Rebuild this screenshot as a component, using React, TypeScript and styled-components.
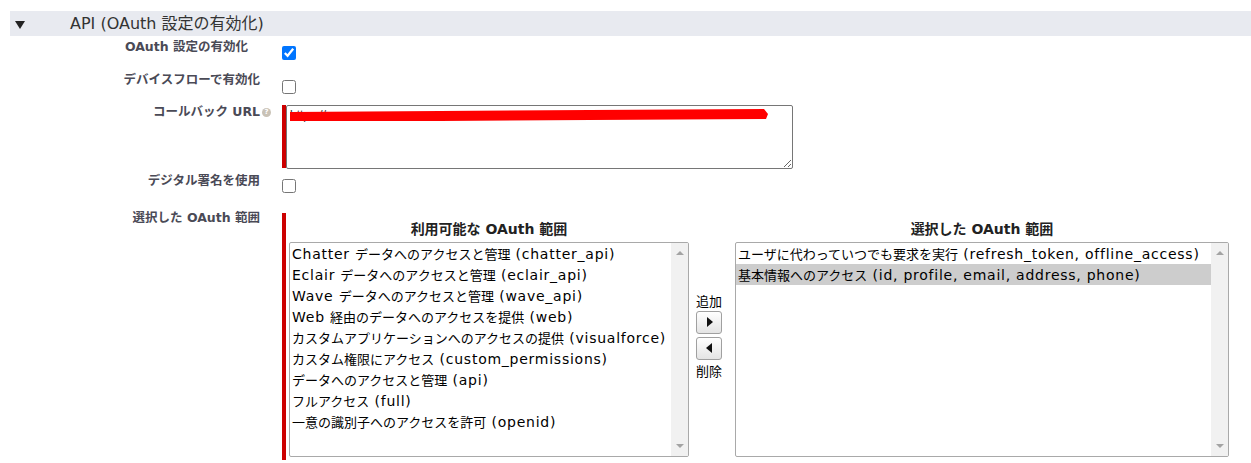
import styled, { createGlobalStyle } from 'styled-components';

const availableScopes = [
  'Chatter データへのアクセスと管理 (chatter_api)',
  'Eclair データへのアクセスと管理 (eclair_api)',
  'Wave データへのアクセスと管理 (wave_api)',
  'Web 経由のデータへのアクセスを提供 (web)',
  'カスタムアプリケーションへのアクセスの提供 (visualforce)',
  'カスタム権限にアクセス (custom_permissions)',
  'データへのアクセスと管理 (api)',
  'フルアクセス (full)',
  '一意の識別子へのアクセスを許可 (openid)',
];

const selectedScopes = [
  'ユーザに代わっていつでも要求を実行 (refresh_token, offline_access)',
  '基本情報へのアクセス (id, profile, email, address, phone)',
];

// latin runs get their own (wider) face, like the old listbox font
const splitScript = (text: string) => text.split(/([\x20-\x7e]+)/).filter(Boolean);
const isLatin = (part: string) => /^[\x20-\x7e]+$/.test(part);

const ScopeText: React.FC<{ text: string }> = ({ text }) => (
  <>
    {splitScript(text).map((part, idx) =>
      isLatin(part) ? <Latin key={idx}>{part}</Latin> : <span key={idx}>{part}</span>
    )}
  </>
);

const GlobalStyle = createGlobalStyle`
  body {
    margin: 0;
    background: #fff;
    font-family: "DejaVu Sans", "Noto Sans CJK JP", sans-serif;
  }
`;

const App: React.FC = () => {
  return (
    <Page>
      <GlobalStyle />
      <SectionHeader>
        <Toggle />
        <SectionTitle>API (OAuth 設定の有効化)</SectionTitle>
      </SectionHeader>
      <Form>
        <Label $pr={34}>OAuth 設定の有効化</Label>
        <Field $pt={8} $pb={11}>
          <Check type="checkbox" defaultChecked />
        </Field>

        <Label>デバイスフローで有効化</Label>
        <Field $pt={9} $pb={9}>
          <Check type="checkbox" />
        </Field>

        <Label>
          コールバック URL<HelpIcon>?</HelpIcon>
        </Label>
        <Field $pt={2} $pb={4}>
          <Required>
            <UrlInput defaultValue="https://xxxxxxxxxx-xxxx-xxxxxxxxxxxxxxxxxxxx.xxx.xxxxxx.xxx/xxxxxxxxxxxxxxxxxxxx" />
            <Redaction viewBox="0 0 480 16" width="480" height="16">
              <polygon points="0,4 150,3 300,2 474,1 478,6 476,11 300,12 150,13 0,13" fill="#ff0000" />
            </Redaction>
          </Required>
        </Field>

        <Label>デジタル署名を使用</Label>
        <Field $pt={7} $pb={16}>
          <Check type="checkbox" />
        </Field>

        <Label>選択した OAuth 範囲</Label>
        <Field $pt={4} $pb={0}>
          <ScopePicker>
            <ScopeColumn>
              <ColumnTitle>利用可能な OAuth 範囲</ColumnTitle>
              <ListBox $w={400}>
                <Options>
                  {availableScopes.map((s) => (
                    <Option key={s}>
                      <ScopeText text={s} />
                    </Option>
                  ))}
                </Options>
                <ScrollTrack>
                  <ArrowUp />
                  <ArrowDown />
                </ScrollTrack>
              </ListBox>
            </ScopeColumn>

            <Mover>
              <MoverText>追加</MoverText>
              <MoveButton>
                <TriRight />
              </MoveButton>
              <MoveButton>
                <TriLeft />
              </MoveButton>
              <MoverText>削除</MoverText>
            </Mover>

            <ScopeColumn>
              <ColumnTitle>選択した OAuth 範囲</ColumnTitle>
              <ListBox $w={494}>
                <Options>
                  {selectedScopes.map((s, idx) => (
                    <Option key={s} $selected={idx === 1}>
                      <ScopeText text={s} />
                    </Option>
                  ))}
                </Options>
                <ScrollTrack>
                  <ArrowUp />
                  <ArrowDown />
                </ScrollTrack>
              </ListBox>
            </ScopeColumn>
          </ScopePicker>
        </Field>
      </Form>
    </Page>
  );
};

const Page = styled.div`
  padding: 11px 0 0 10px;
  height: 463px;
  box-sizing: border-box;
  overflow: hidden;
`;

const SectionHeader = styled.div`
  display: flex;
  align-items: center;
  height: 25px;
  background: #e8eaf0;
  padding-left: 5px;
`;

const Toggle = styled.div`
  width: 0;
  height: 0;
  border-left: 5px solid transparent;
  border-right: 5px solid transparent;
  border-top: 8px solid #222;
  margin-right: 45px;
  margin-top: 2px;
`;

const SectionTitle = styled.div`
  font-size: 16px;
  color: #333;
  line-height: 20px;
`;

const Form = styled.div`
  display: grid;
  grid-template-columns: 272px 1fr;
  margin-top: 2px;
`;

const Label = styled.div<{ $pr?: number }>`
  padding: 1px ${(p) => p.$pr ?? 22}px 0 0;
  text-align: right;
  font-weight: bold;
  font-size: 12.5px;
  line-height: 16px;
  color: #4a4a56;
  white-space: nowrap;
`;

const HelpIcon = styled.span`
  display: inline-flex;
  align-items: center;
  justify-content: center;
  width: 9px;
  height: 9px;
  margin: 0 -11px 0 2px;
  border-radius: 50%;
  background: #c9c2b6;
  color: #fff;
  font-size: 7px;
  line-height: 9px;
  vertical-align: middle;
`;

const Field = styled.div<{ $pt: number; $pb: number }>`
  padding: ${(p) => p.$pt}px 0 ${(p) => p.$pb}px;
  display: flex;
`;

const Check = styled.input`
  width: 14px;
  height: 14px;
  margin: 0;
`;

const Required = styled.div`
  position: relative;
  display: flex;
  border-left: 4px solid #cc0000;
  height: 63px;
`;

const UrlInput = styled.textarea`
  width: 507px;
  height: 64px;
  box-sizing: border-box;
  border: 1px solid #767676;
  border-radius: 2px;
  padding: 2px 3px;
  font-family: "Liberation Sans", sans-serif;
  font-size: 12px;
  color: #333;
  outline: none;
`;

const Redaction = styled.svg`
  position: absolute;
  left: 4px;
  top: 3px;
`;

const ScopePicker = styled.div`
  display: flex;
  border-left: 4px solid #cc0000;
  padding-left: 3px;
  height: 247px;
  box-sizing: border-box;
`;

const ScopeColumn = styled.div`
  display: flex;
  flex-direction: column;
`;

const ColumnTitle = styled.div`
  height: 29px;
  box-sizing: border-box;
  display: flex;
  align-items: flex-end;
  justify-content: center;
  padding-bottom: 5px;
  font-weight: bold;
  font-size: 14px;
  line-height: 16px;
  color: #222;
`;

const ListBox = styled.div<{ $w: number }>`
  display: flex;
  width: ${(p) => p.$w}px;
  height: 215px;
  box-sizing: border-box;
  border: 1px solid #a9a9a9;
  border-radius: 2px;
  background: #fff;
  overflow: hidden;
`;

const Options = styled.div`
  flex: 1;
  font-family: "Noto Sans CJK JP", sans-serif;
  font-size: 13px;
  color: #000;
`;

const Option = styled.div<{ $selected?: boolean }>`
  height: 21px;
  line-height: 21px;
  padding-left: 2px;
  white-space: nowrap;
  background: ${(p) => (p.$selected ? '#cdcdcd' : 'transparent')};
`;

const Latin = styled.span`
  font-family: "DejaVu Sans", sans-serif;
  font-size: 14px;
  letter-spacing: 0.75px;
`;

const ScrollTrack = styled.div`
  width: 17px;
  background: #f1f1f1;
  display: flex;
  flex-direction: column;
  justify-content: space-between;
  align-items: center;
  padding: 8px 0;
`;

const ArrowUp = styled.div`
  width: 0;
  height: 0;
  border-left: 4px solid transparent;
  border-right: 4px solid transparent;
  border-bottom: 4px solid #a3a3a3;
`;

const ArrowDown = styled.div`
  width: 0;
  height: 0;
  border-left: 4px solid transparent;
  border-right: 4px solid transparent;
  border-top: 4px solid #a3a3a3;
`;

const Mover = styled.div`
  width: 46px;
  box-sizing: border-box;
  padding: 0 0 3px 7px;
  display: flex;
  flex-direction: column;
  justify-content: center;
  align-items: flex-start;
  gap: 3px;
`;

const MoverText = styled.div`
  font-family: "Noto Sans CJK JP", sans-serif;
  font-size: 13px;
  line-height: 15px;
  color: #000;
`;

const MoveButton = styled.div`
  width: 26px;
  height: 23px;
  box-sizing: border-box;
  border: 1px solid #a0a0a0;
  border-radius: 3px;
  background: linear-gradient(#ffffff, #e4e4e4);
  display: flex;
  align-items: center;
  justify-content: center;
`;

const TriRight = styled.div`
  width: 0;
  height: 0;
  border-top: 5px solid transparent;
  border-bottom: 5px solid transparent;
  border-left: 6px solid #111;
  margin-left: 1px;
`;

const TriLeft = styled.div`
  width: 0;
  height: 0;
  border-top: 5px solid transparent;
  border-bottom: 5px solid transparent;
  border-right: 6px solid #111;
  margin-right: 1px;
`;

export default App;
